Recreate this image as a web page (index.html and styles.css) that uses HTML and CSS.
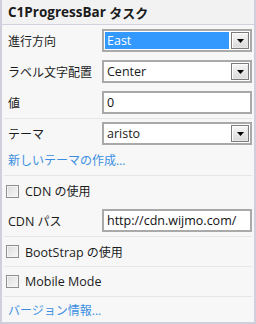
FILE: index.html
```html
<!DOCTYPE html>
<html lang="ja">
<head>
<meta charset="utf-8">
<link rel="stylesheet" href="styles.css">
</head>
<body>
<div class="panel">
  <div class="header"><span class="en">C1ProgressBar</span>&nbsp;タスク</div>
  <div class="section s1">
    <div class="row">
      <span class="label">進行方向</span>
      <div class="select">
        <span class="value selected en">East</span>
        <span class="btn"><svg width="7" height="4" viewBox="0 0 7 4"><path d="M0 0H7L3.5 4Z" fill="#000"/></svg></span>
      </div>
    </div>
    <div class="row">
      <span class="label">ラベル文字配置</span>
      <div class="select">
        <span class="value en">Center</span>
        <span class="btn"><svg width="7" height="4" viewBox="0 0 7 4"><path d="M0 0H7L3.5 4Z" fill="#000"/></svg></span>
      </div>
    </div>
    <div class="row">
      <span class="label">値</span>
      <div class="input en">0</div>
    </div>
  </div>
  <div class="sep"></div>
  <div class="section s2">
    <div class="row">
      <span class="label">テーマ</span>
      <div class="select">
        <span class="value en">aristo</span>
        <span class="btn"><svg width="7" height="4" viewBox="0 0 7 4"><path d="M0 0H7L3.5 4Z" fill="#000"/></svg></span>
      </div>
    </div>
    <div class="linkrow"><span class="link">新しいテーマの作成…</span></div>
  </div>
  <div class="sep"></div>
  <div class="section s3">
    <div class="checkrow"><span class="checkbox"></span><span><span class="en">CDN</span> の使用</span></div>
    <div class="row inrow">
      <span class="label"><span class="en">CDN</span> パス</span>
      <div class="input en">http://cdn.wijmo.com/</div>
    </div>
  </div>
  <div class="sep"></div>
  <div class="checkrow single"><span class="checkbox"></span><span><span class="en">BootStrap</span> の使用</span></div>
  <div class="sep"></div>
  <div class="checkrow single"><span class="checkbox"></span><span class="en">Mobile Mode</span></div>
  <div class="sep"></div>
  <div class="linkrow last"><span class="link">バージョン情報...</span></div>
</div>
</body>
</html>
```
FILE: styles.css
```css
html, body {
  margin: 0;
  padding: 0;
  background: #f7f7f7;
}
.panel {
  width: 256px;
  height: 324px;
  box-sizing: border-box;
  border: 2px solid #cfcfdc;
  border-top: 0;
  background: #f7f7f7;
  font-family: "Open Sans", "Noto Sans CJK JP", sans-serif;
  font-size: 12px;
  color: #1b1b1b;
  display: flex;
  flex-direction: column;
}
.en {
  font-size: 12.5px;
}
.header {
  height: 25px;
  box-sizing: border-box;
  background: #f2f2f3;
  border-bottom: 1px solid #d2d2de;
  padding-left: 6px;
  font-weight: bold;
  font-size: 13px;
  display: flex;
  align-items: center;
  flex-shrink: 0;
}
.header .en {
  font-size: 13.5px;
}
.section {
  display: flex;
  flex-direction: column;
}
.s1 {
  padding: 4px 0 4px;
  gap: 8px;
}
.s2 {
  padding-top: 3px;
}
.row {
  display: grid;
  grid-template-columns: 100px 150px;
  align-items: center;
  height: 23px;
}
.label {
  padding-left: 6px;
}
.select, .input {
  height: 23px;
  box-sizing: border-box;
  border: 2px solid #a9a9a9;
  background: #fff;
}
.select {
  display: flex;
  padding: 1px;
  gap: 2px;
}
.value {
  flex: 1;
  display: flex;
  align-items: center;
  padding-left: 2px;
}
.value.selected {
  background: #3399ff;
  color: #fff;
}
.btn {
  width: 18px;
  box-sizing: border-box;
  border: 1px solid #7c7c7c;
  box-shadow: inset 1px 1px 0 #fff, inset -1px -1px 0 #e6e6e6;
  background: linear-gradient(#f6f6f6, #d9d9d9);
  display: flex;
  align-items: center;
  justify-content: center;
}
.btn svg {
  display: block;
}
.input {
  display: flex;
  align-items: center;
  padding-left: 3px;
  color: #111;
}
.linkrow {
  height: 30px;
  display: flex;
  align-items: center;
  padding-left: 6px;
}
.linkrow.last {
  height: 25px;
}
.link {
  color: #3b8fe2;
}
.sep {
  height: 1px;
  background: #e6e6e6;
  margin: 0 2px;
  flex-shrink: 0;
}
.checkrow {
  height: 30px;
  display: flex;
  align-items: center;
  padding-left: 4px;
  gap: 6px;
}
.checkrow.single {
  height: 29px;
}
.checkbox {
  width: 13px;
  height: 13px;
  box-sizing: border-box;
  border: 1px solid #8e8f8f;
  background: linear-gradient(135deg, #dcdcdc, #f8f8f8);
  box-shadow: inset 0 0 0 1px #f4f4f4;
}
.inrow {
  height: 23px;
  padding: 3px 0 4px;
}
```
